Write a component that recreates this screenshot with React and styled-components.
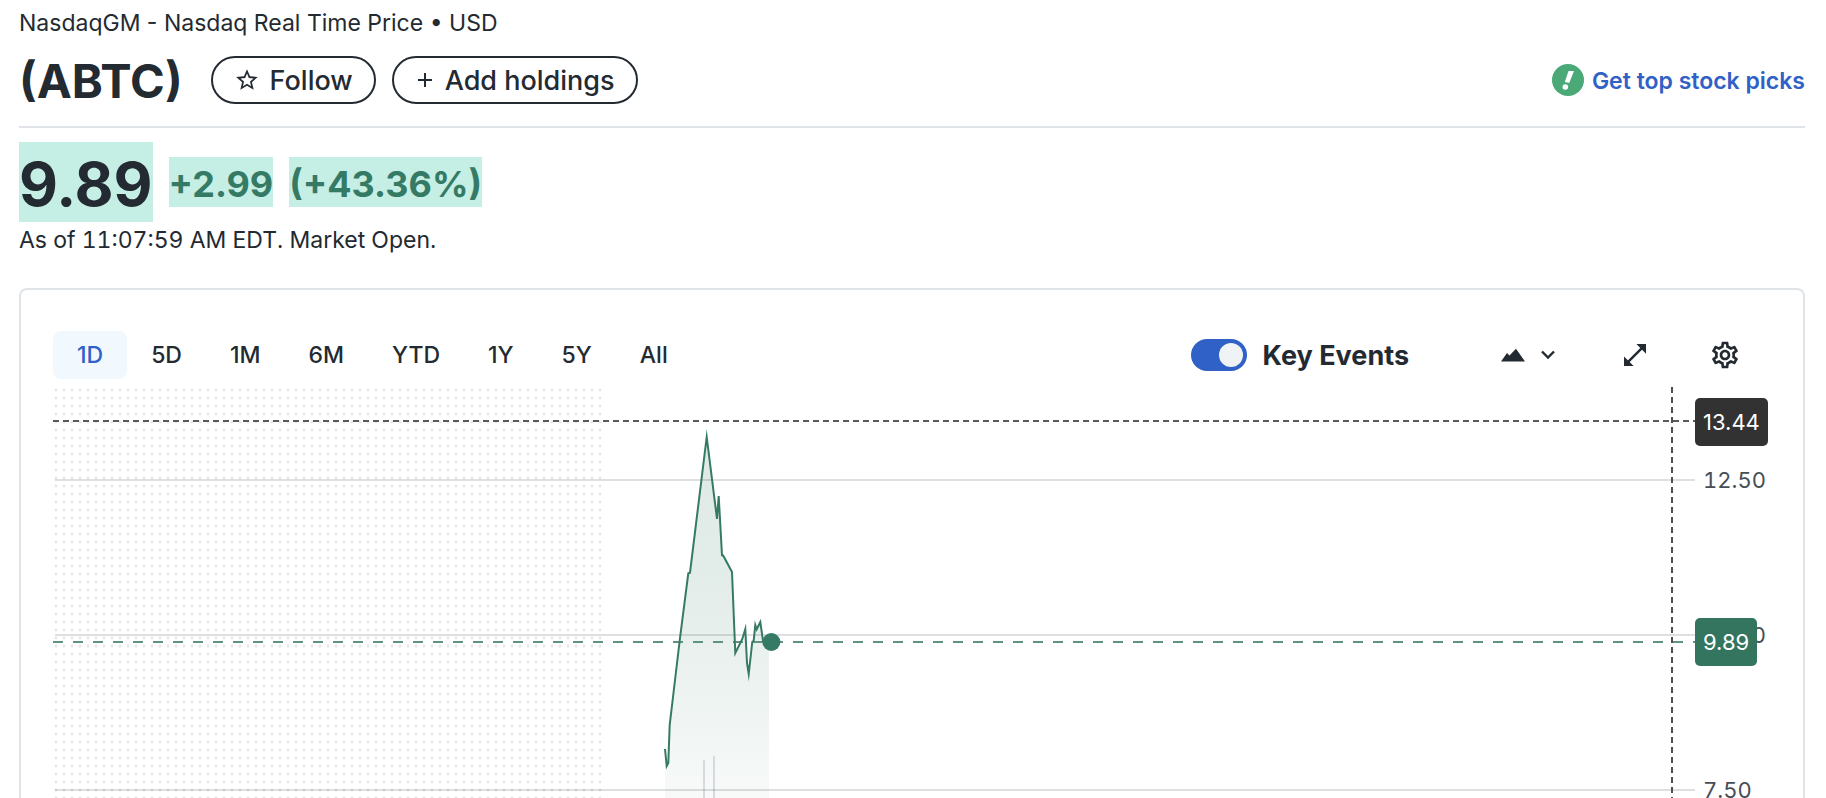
import React, { useState } from "react";
import styled, { createGlobalStyle } from "styled-components";
import { MdOutlineSettings, MdStarBorder } from "react-icons/md";

const Global = createGlobalStyle`
  *, *::before, *::after { box-sizing: border-box; }
  html, body { margin: 0; background: #fff; }
  body {
    font-family: Inter, "Liberation Sans", sans-serif;
    font-size: 23px;
    line-height: 32px;
    color: #232a31;
  }
  button { font: inherit; color: inherit; border: 0; background: none; padding: 0; cursor: pointer; }
`;

const Page = styled.main`
  display: flex;
  flex-direction: column;
  height: 100vh;
  overflow: hidden;
  padding: 7px 21px 0 19px;
`;

const Note = styled.p`
  margin: 0;
  font-variant-numeric: ${(p) => (p.$tabular ? "tabular-nums" : "normal")};
`;

const TitleRow = styled.header`
  display: flex;
  align-items: center;
  justify-content: space-between;
  padding: 17px 0 22px;
  border-bottom: 2px solid #e0e4e9;
`;

const TitleGroup = styled.div`
  display: flex;
  align-items: center;
  gap: 16px;
`;

const Symbol = styled.h1`
  margin: 0 12px 0 0;
  padding-top: 2px;
  font-size: 47px;
  line-height: 46px;
  font-weight: 700;
`;

const Label = styled.span`
  padding-top: 2px;
`;

const PillButton = styled.button`
  display: flex;
  align-items: center;
  gap: 10px;
  height: 48px;
  padding: 0 21px;
  border: 2px solid #232a31;
  border-radius: 24px;
  font-size: 27px;
  font-weight: 500;
`;

const PicksLink = styled.a`
  display: flex;
  align-items: center;
  gap: 8px;
  font-weight: 600;
  color: #3061c6;
  text-decoration: none;
`;

const PriceRow = styled.section`
  display: flex;
  align-items: center;
  gap: 16px;
  padding: 14px 0 2px;
`;

const Price = styled.span`
  padding-top: 4px;
  font-size: 60px;
  line-height: 76px;
  font-weight: 700;
  background: #c5eee4;
`;

const Change = styled.span`
  padding-top: 4px;
  font-size: 36px;
  line-height: 46px;
  font-weight: 700;
  color: #357a65;
  background: #c5eee4;
`;

const Card = styled.section`
  display: flex;
  flex-direction: column;
  flex: 1;
  min-height: 0;
  margin-top: 32px;
  padding: 41px 32px 0;
  border: 2px solid #e0e4e9;
  border-bottom: 0;
  border-radius: 8px 8px 0 0;
`;

const Toolbar = styled.div`
  display: flex;
  align-items: center;
  justify-content: space-between;
  height: 48px;
  margin-bottom: 8px;
`;

const Tabs = styled.div`
  display: flex;
`;

const Tab = styled.button`
  height: 48px;
  padding: 0 24px;
  border-radius: 8px;
  font-weight: 500;
  color: ${(p) => (p.$active ? "#3061c6" : "#232a31")};
  background: ${(p) => (p.$active ? "#f1f8fe" : "transparent")};
`;

const Tools = styled.div`
  display: flex;
  align-items: center;
  gap: 42px;
  padding-right: 22px;
`;

const SwitchLabel = styled.label`
  display: flex;
  align-items: center;
  gap: 16px;
  margin-right: 36px;
  font-size: 27px;
  font-weight: 700;
  cursor: pointer;
`;

const Switch = styled.input`
  appearance: none;
  display: flex;
  align-items: center;
  width: 56px;
  height: 32px;
  margin: 0;
  padding: 4px;
  border-radius: 16px;
  background: #3061c6;
  cursor: pointer;

  &::before {
    content: "";
    width: 24px;
    height: 24px;
    border-radius: 50%;
    background: #f0f3f5;
  }
  &:checked { justify-content: flex-end; }
  &:not(:checked) { background: #828c93; }
`;

const ToolButton = styled.button`
  display: flex;
  align-items: center;
  justify-content: center;
  gap: 16px;
  height: 48px;
  width: ${(p) => (p.$wide ? "82px" : "48px")};
`;

const Chart = styled.div`
  display: flex;
  flex: 1;
  min-height: 0;
`;

const Plot = styled.svg`
  flex: 1;
  min-width: 0;
  height: 100%;
  overflow: visible;
`;

const Axis = styled.div`
  position: relative;
  width: 76px;
  font-size: 22px;
`;

const Tick = styled.span`
  position: absolute;
  left: 0;
  padding: 0 8px;
  line-height: 48px;
  transform: translateY(-50%);
  color: #464e56;
  font-variant-numeric: tabular-nums;
`;

const Badge = styled(Tick)`
  border-radius: 5px;
  color: #fff;
  background: ${(p) => p.$color};
  font-variant-numeric: normal;
`;

const RANGES = ["1D", "5D", "1M", "6M", "YTD", "1Y", "5Y", "All"];
const TICKS = [12.5, 10, 7.5];
const yOf = (price) => Math.round(93 + (12.5 - price) * 62);

const CURVE =
  "M612 362L613.7 379L615.3 376L616.7 338L627 251L635.3 186.3L637 185.7L653.7 50L664 132L665.7 109L669 168.3L670.3 168.7L679 185L682.3 266L689.3 252L692.3 242L694 276L695.7 287L699.3 254.7L700.7 253.7L702.3 238L703.7 242.3L707.3 235L710 253.7L716 254";

function PicksIcon() {
  return (
    <svg width="32" height="32" viewBox="0 0 32 32" aria-hidden="true">
      <circle cx="16" cy="16" r="16" fill="#4ba877" />
      <path d="M16.5 7L22 7L17.2 19L12.8 18Z" fill="#fff" />
      <circle cx="13.3" cy="23" r="2.8" fill="#fff" />
    </svg>
  );
}

function PlusIcon() {
  return (
    <svg width="20" height="20" viewBox="0 0 20 20" aria-hidden="true">
      <path d="M10 3V17M3 10H17" stroke="#232a31" strokeWidth="2" />
    </svg>
  );
}

function AreaIcon() {
  return (
    <svg width="24" height="14" viewBox="0 0 24 14" aria-hidden="true">
      <path d="M0 13.5L6 5L8.5 7.5L15 0.8L24 13.5Z" fill="#232a31" />
    </svg>
  );
}

function ChevronIcon() {
  return (
    <svg width="14" height="10" viewBox="0 0 14 10" aria-hidden="true">
      <path d="M1 1.5L7 7.5L13 1.5" fill="none" stroke="#232a31" strokeWidth="2.4" />
    </svg>
  );
}

function ExpandIcon() {
  return (
    <svg width="22" height="22" viewBox="0 0 64 64" aria-hidden="true">
      <path d="M36 0H64V28ZM0 36V64H28Z" fill="#232a31" />
      <path d="M12 52L52 12" stroke="#232a31" strokeWidth="7" />
    </svg>
  );
}

function PricePlot() {
  const last = yOf(9.89);
  return (
    <Plot role="img" aria-label="ABTC price, one day">
      <defs>
        <pattern id="dots" width="8" height="8" x="-1" y="-1" patternUnits="userSpaceOnUse">
          <circle cx="4" cy="4" r="1.4" fill="#e6e6e8" />
        </pattern>
        <linearGradient id="area" gradientUnits="userSpaceOnUse" x1="0" y1="45" x2="0" y2="411">
          <stop offset="0" stopColor="#357a65" stopOpacity="0.16" />
          <stop offset="0.4" stopColor="#357a65" stopOpacity="0.14" />
          <stop offset="1" stopColor="#357a65" stopOpacity="0.04" />
        </linearGradient>
      </defs>
      <rect width="33.6%" height="100%" fill="url(#dots)" />
      <svg width="100%" height="411" viewBox="0 0 1642 411" preserveAspectRatio="none">
        <path d={`${CURVE}V420H612Z`} fill="url(#area)" />
        <path d="M651 373V411M661 369V411" stroke="#d6dadd" strokeWidth="2" />
      </svg>
      {TICKS.map((t) => (
        <line key={t} x1="2" x2="100%" y1={yOf(t)} y2={yOf(t)} stroke="#464e56" strokeOpacity="0.18" strokeWidth="2" />
      ))}
      <line x2="100%" y1={last} y2={last} stroke="#5f9280" strokeWidth="2" strokeDasharray="10 10" />
      <svg width="100%" height="411" viewBox="0 0 1642 411" preserveAspectRatio="none">
        <path d={CURVE} fill="none" stroke="#357a65" strokeWidth="2" strokeMiterlimit="10" vectorEffect="non-scaling-stroke" />
      </svg>
      <circle cx="43.75%" cy={last} r="9" fill="#357a65" />
      <line x2="100%" y1="34" y2="34" stroke="#5a5a5c" strokeWidth="2" strokeDasharray="6 4" />
      <line x1="98.6%" x2="98.6%" y2="100%" stroke="#4c4e52" strokeWidth="2" strokeDasharray="6 4" />
    </Plot>
  );
}

export default function App() {
  const [range, setRange] = useState("1D");
  const [events, setEvents] = useState(true);
  return (
    <Page>
      <Global />
      <Note>NasdaqGM - Nasdaq Real Time Price • USD</Note>
      <TitleRow>
        <TitleGroup>
          <Symbol>(ABTC)</Symbol>
          <PillButton type="button">
            <MdStarBorder size={26} aria-hidden="true" />
            <Label>Follow</Label>
          </PillButton>
          <PillButton type="button">
            <PlusIcon />
            <Label>Add holdings</Label>
          </PillButton>
        </TitleGroup>
        <PicksLink href="#picks">
          <PicksIcon />
          <Label>Get top stock picks</Label>
        </PicksLink>
      </TitleRow>
      <PriceRow>
        <Price>9.89</Price>
        <Change>+2.99</Change>
        <Change>(+43.36%)</Change>
      </PriceRow>
      <Note $tabular>As of 11:07:59 AM EDT. Market Open.</Note>
      <Card>
        <Toolbar>
          <Tabs>
            {RANGES.map((r) => (
              <Tab key={r} type="button" $active={r === range} aria-pressed={r === range} onClick={() => setRange(r)}>
                {r}
              </Tab>
            ))}
          </Tabs>
          <Tools>
            <SwitchLabel htmlFor="key-events">
              <Switch id="key-events" type="checkbox" role="switch" checked={events} onChange={(e) => setEvents(e.target.checked)} />
              <Label>Key Events</Label>
            </SwitchLabel>
            <ToolButton type="button" $wide aria-label="Chart type">
              <AreaIcon />
              <ChevronIcon />
            </ToolButton>
            <ToolButton type="button" aria-label="Full screen">
              <ExpandIcon />
            </ToolButton>
            <ToolButton type="button" aria-label="Chart settings">
              <MdOutlineSettings size={32} aria-hidden="true" />
            </ToolButton>
          </Tools>
        </Toolbar>
        <Chart>
          <PricePlot />
          <Axis>
            {TICKS.map((t) => (
              <Tick key={t} style={{ top: yOf(t) }}>{t.toFixed(2)}</Tick>
            ))}
            <Badge $color="#323232" style={{ top: yOf(13.44) }}>13.44</Badge>
            <Badge $color="#33755f" style={{ top: yOf(9.89) }}>9.89</Badge>
          </Axis>
        </Chart>
      </Card>
    </Page>
  );
}
